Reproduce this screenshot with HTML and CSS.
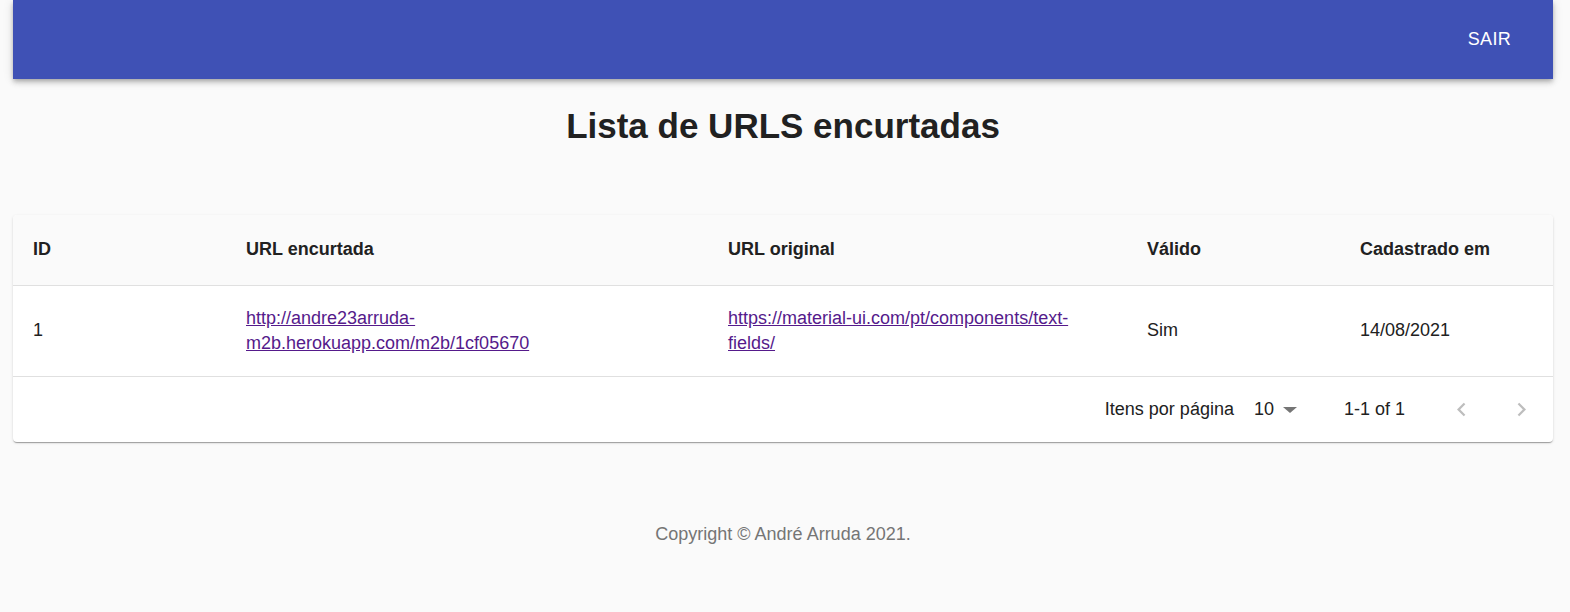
FILE: index.html
```html
<!DOCTYPE html>
<html lang="pt">
<head>
<meta charset="utf-8">
<title>Lista de URLS encurtadas</title>
<link rel="stylesheet" href="styles.css">
</head>
<body>
<div class="page">
  <header class="appbar">
    <button class="logout">SAIR</button>
  </header>
  <h1 class="title">Lista de URLS encurtadas</h1>
  <div class="card">
    <table class="table">
      <colgroup>
        <col class="c-id"><col class="c-short"><col class="c-orig"><col class="c-valid"><col class="c-date">
      </colgroup>
      <thead>
        <tr>
          <th>ID</th><th>URL encurtada</th><th>URL original</th><th>Válido</th><th>Cadastrado em</th>
        </tr>
      </thead>
      <tbody>
        <tr>
          <td>1</td>
          <td><a class="link" href="#">http://andre23arruda-m2b.herokuapp.com/m2b/1cf05670</a></td>
          <td><a class="link" href="#">https://material-ui.com/pt/components/text-fields/</a></td>
          <td>Sim</td>
          <td>14/08/2021</td>
        </tr>
      </tbody>
    </table>
    <div class="pagination">
      <span class="pg-label">Itens por página</span>
      <span class="pg-select">10 <span class="caret"></span></span>
      <span class="pg-range">1-1 of 1</span>
      <span class="pg-actions">
        <span class="pg-btn"><svg viewBox="0 0 24 24" width="27" height="27"><path d="M15.41 7.41L14 6l-6 6 6 6 1.41-1.41L10.83 12z"/></svg></span>
        <span class="pg-btn"><svg viewBox="0 0 24 24" width="27" height="27"><path d="M10 6L8.59 7.41 13.17 12l-4.58 4.59L10 18l6-6z"/></svg></span>
      </span>
    </div>
  </div>
  <footer class="footer">Copyright © André Arruda 2021.</footer>
</div>
</body>
</html>
```

FILE: styles.css
```css
* { box-sizing: border-box; }
html, body { margin: 0; padding: 0; }
body {
  background: #fafafa;
  font-family: "Liberation Sans", Arial, sans-serif;
  color: rgba(0,0,0,0.87);
}
.page {
  width: 1540px;
  margin-left: 13px;
}
.appbar {
  height: 79px;
  background: #3f51b5;
  display: flex;
  align-items: center;
  justify-content: flex-end;
  padding-right: 42px;
  box-shadow: 0 2px 4px -1px rgba(0,0,0,0.2), 0 4px 5px 0 rgba(0,0,0,0.14), 0 1px 10px 0 rgba(0,0,0,0.12);
}
.logout {
  background: none;
  border: 0;
  color: #fff;
  font-family: inherit;
  font-size: 18px;
  padding: 0;
  letter-spacing: 0.3px;
}
.title {
  margin: 23px 0 0;
  text-align: center;
  font-size: 35px;
  font-weight: 700;
  line-height: 48px;
  color: #212121;
}
.card {
  margin-top: 65px;
  background: #fff;
  border-radius: 4px;
  overflow: hidden;
  box-shadow: 0 2px 1px -1px rgba(0,0,0,0.2), 0 1px 1px 0 rgba(0,0,0,0.14), 0 1px 3px 0 rgba(0,0,0,0.12);
}
.table {
  width: 100%;
  border-collapse: collapse;
  table-layout: fixed;
  font-size: 18px;
}
.c-id { width: 213px; }
.c-short { width: 482px; }
.c-orig { width: 419px; }
.c-valid { width: 213px; }
.c-date { width: 213px; }
.table th {
  background: #fafafa;
  text-align: left;
  font-weight: 700;
  height: 70px;
  padding: 0 20px;
  border-bottom: 1px solid #e0e0e0;
  color: #212121;
}
.table td {
  height: 91px;
  padding: 0 20px;
  line-height: 25px;
  border-bottom: 1px solid #e0e0e0;
  vertical-align: middle;
  color: #212121;
}
.link { color: #551a8b; }
.pagination {
  height: 65px;
  display: flex;
  align-items: center;
  justify-content: flex-end;
  font-size: 18px;
  color: #212121;
  padding-right: 5px;
}
.pg-select {
  display: flex;
  align-items: center;
  margin-left: 20px;
  gap: 9px;
}
.caret {
  width: 0; height: 0;
  border-left: 7px solid transparent;
  border-right: 7px solid transparent;
  border-top: 6px solid #757575;
  margin-top: 2px;
}
.pg-range { margin-left: 47px; }
.pg-actions { display: flex; gap: 6px; margin-left: 29px; }
.pg-btn {
  width: 54px; height: 54px;
  display: flex; align-items: center; justify-content: center;
}
.pg-btn svg { fill: rgba(0,0,0,0.26); }
.footer {
  margin-top: 82px;
  text-align: center;
  font-size: 18px;
  color: #757575;
}
```
